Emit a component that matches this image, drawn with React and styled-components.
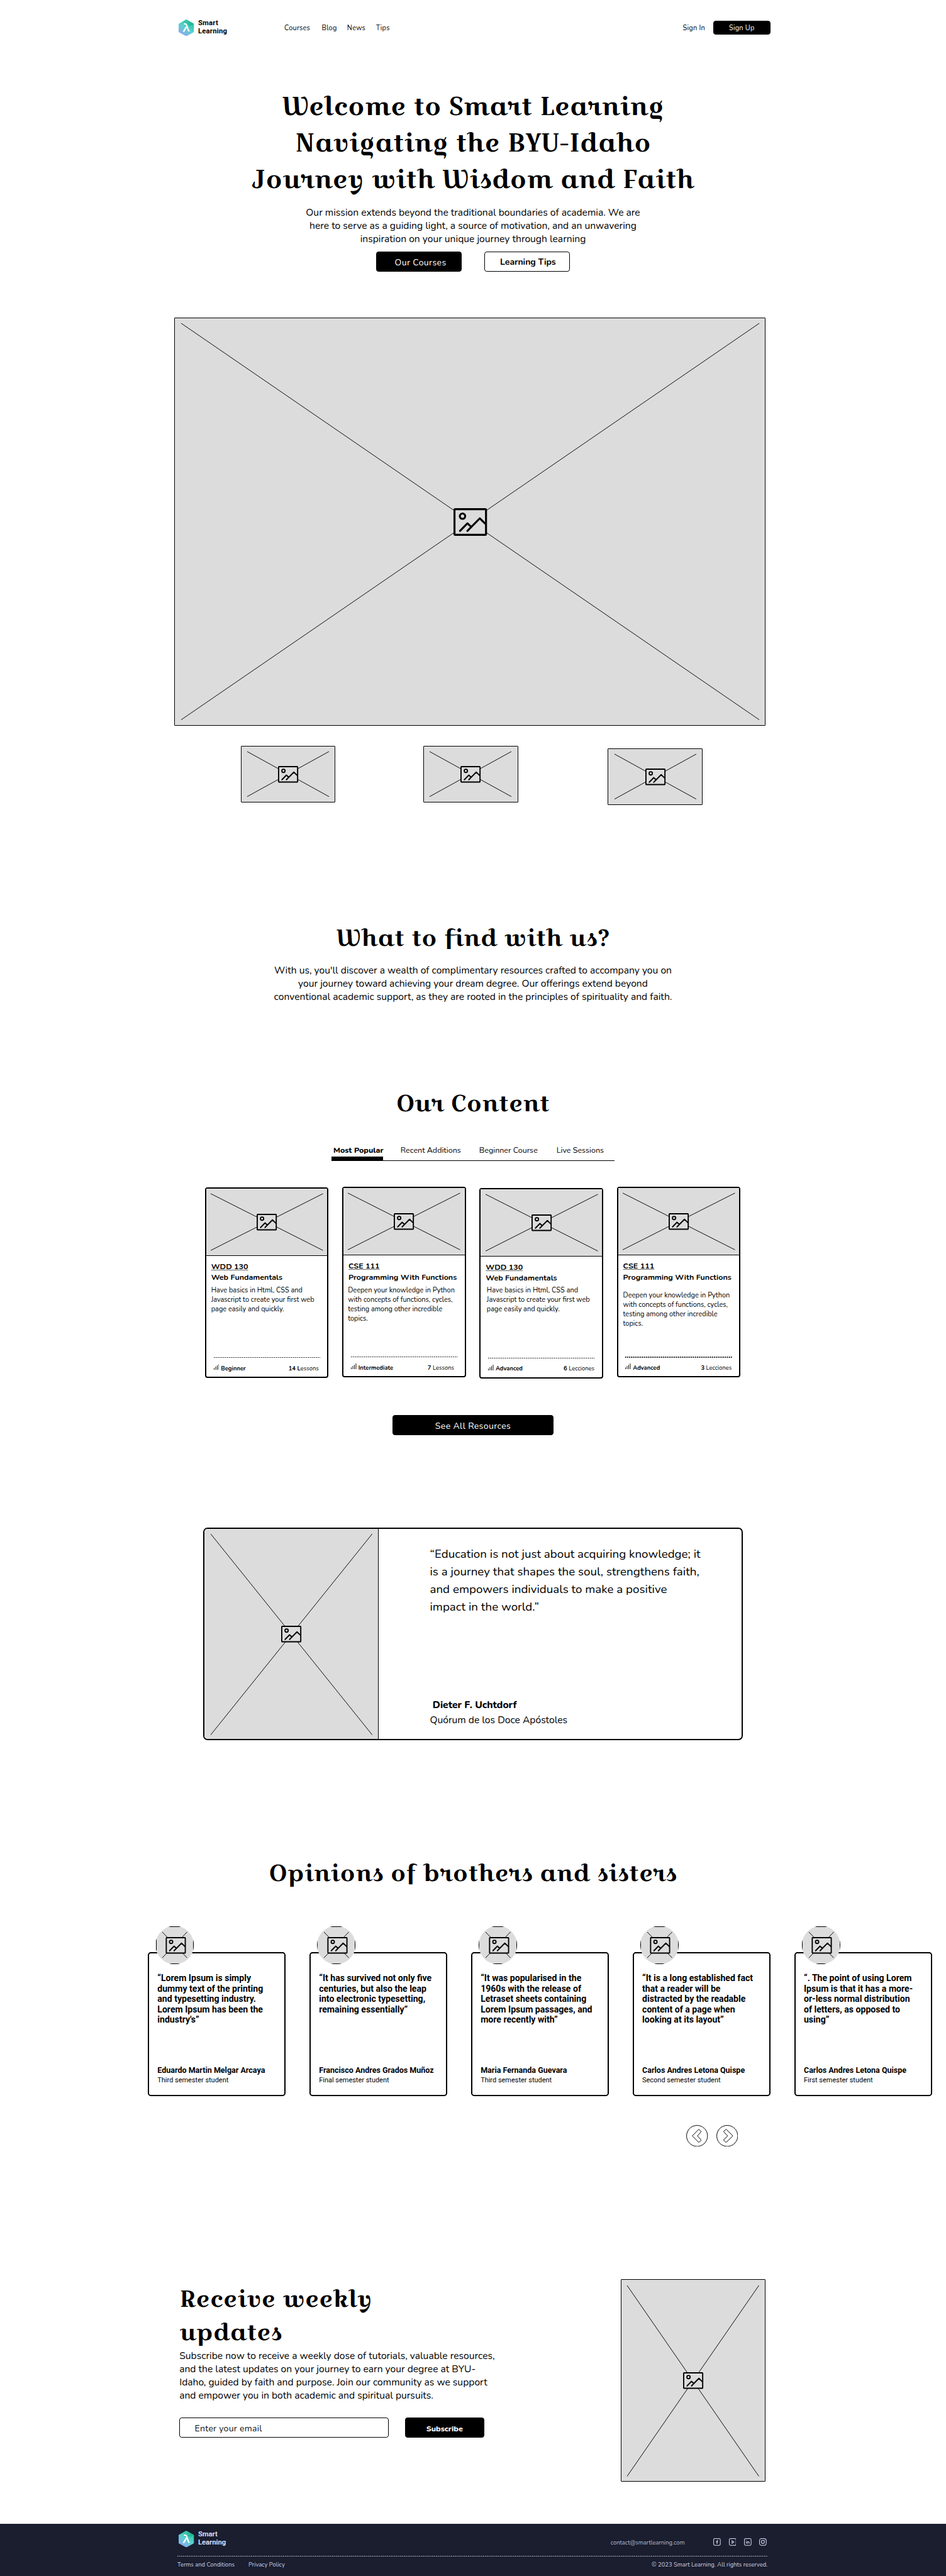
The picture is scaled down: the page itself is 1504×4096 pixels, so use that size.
import React from "react";
import styled, { createGlobalStyle, css } from "styled-components";

/* 1rem is ten design pixels */
const GlobalStyle = createGlobalStyle`
  html { font-size: 7.83333px; }
  body { margin: 0; background: #fff; }
  *, *::before, *::after { box-sizing: border-box; }
  h1, h2, h3, p { margin: 0; padding: 0; font-size: inherit; font-weight: inherit; }
`;

const sans = `Nunito, "Open Sans", sans-serif`;
const grotesk = `Roboto, "Liberation Sans", sans-serif`;
const display = `"Croissant One", "Liberation Serif", serif`;

const Page = styled.div`
  width: 1504px;
  height: 4096px;
  overflow: hidden;
  display: flex;
  flex-direction: column;
  font-family: ${sans};
  color: #000;
`;

/* ---------- shared pieces ---------- */

const Heading = styled.h2`
  margin: 0.12rem 0 -0.12rem;
  font-family: ${display};
  font-size: ${(p) => p.$size || 4.8}rem;
  line-height: ${(p) => p.$line || 7}rem;
  text-align: ${(p) => p.$align || "center"};
  white-space: pre-line;
`;

const Copy = styled.p`
  margin-top: ${(p) => p.$gap || 0}rem;
  font-size: 2rem;
  line-height: 2.7rem;
  text-align: ${(p) => p.$align || "center"};
  white-space: pre;
`;

const Button = styled.button`
  display: flex;
  align-items: center;
  justify-content: center;
  flex: none;
  width: ${(p) => p.$width}rem;
  height: ${(p) => p.$height || 4.1}rem;
  margin-top: ${(p) => p.$gap || 0}rem;
  padding: ${(p) => p.$pad || "0.4rem 0 0"};
  border: 1px solid #000;
  border-radius: 0.5rem;
  background: ${(p) => (p.$outline ? "#fff" : "#000")};
  color: ${(p) => (p.$outline ? "#000" : "#fff")};
  font-family: ${sans};
  font-size: ${(p) => p.$size || 1.8}rem;
  font-weight: ${(p) => p.$weight || 400};
  letter-spacing: ${(p) => p.$track ?? 0.045}rem;
  white-space: nowrap;
`;

const Frame = styled.div`
  display: grid;
  grid-template: minmax(0, 1fr) / minmax(0, 1fr);
  flex: none;
  width: ${(p) => p.$width}rem;
  height: ${(p) => p.$height}rem;
  background: #dcdcdc;
  border: 1px solid #000;
  border-radius: ${(p) => p.$radius || "1px"};
  > svg { grid-area: 1 / 1; place-self: center; }
`;

const Cross = styled.svg`
  width: calc(100% - ${(p) => p.$inset[0] * 2}rem);
  height: calc(100% - ${(p) => p.$inset[1] * 2}rem);
  overflow: visible;
  line { stroke: #000; stroke-width: 0.95px; vector-effect: non-scaling-stroke; }
`;

const PictureIcon = styled.svg`
  width: ${(p) => p.$width}rem;
  height: ${(p) => p.$width * 0.824}rem;
  fill: none;
  stroke: #000;
  stroke-width: 4;
  stroke-linecap: round;
  stroke-linejoin: round;
`;

function Picture({ icon = 4.1, inset = [1.2, 1.05], shift = 0 }) {
  return (
    <>
      <Cross $inset={inset} viewBox="0 0 100 100" preserveAspectRatio="none">
        <line x1="0" y1="0" x2="100" y2="100" />
        <line x1="100" y1="0" x2="0" y2="100" />
      </Cross>
      <PictureIcon $width={icon} viewBox={`${-shift} 0 68 56`} overflow="visible">
        <rect x="2" y="2" width="64" height="52" rx="1.5" fill="#dcdcdc" />
        <circle cx="18.3" cy="16.3" r="5.4" />
        <path d="M13.3 46 28.3 30.7 36 38M28.3 46 53.3 20.7 65 32" />
      </PictureIcon>
    </>
  );
}

/* ---------- brand ---------- */

const Brand = styled.div`
  display: flex;
  align-items: center;
  gap: 0.8rem;
  width: ${(p) => p.$width || "auto"};
  color: ${(p) => p.$color || "#000"};
  font: 700 1.44rem/1.6rem ${grotesk};
`;

const Mark = styled.svg`
  width: 3.1rem;
  height: 3.4rem;
`;

function Logo({ id, width, color }) {
  return (
    <Brand $width={width} $color={color}>
      <Mark viewBox="0 0 31 34">
        <defs>
          <linearGradient id={id} x1="0.75" y1="0.05" x2="0.2" y2="0.95">
            <stop offset="0" stopColor="#22bd9b" />
            <stop offset="0.5" stopColor="#5cd0cd" />
            <stop offset="1" stopColor="#8fa5f5" />
          </linearGradient>
          <linearGradient id={id + "-top"} x1="0" y1="0" x2="1" y2="0.6">
            <stop offset="0" stopColor="#4fd0b8" />
            <stop offset="1" stopColor="#14b08c" />
          </linearGradient>
        </defs>
        <path d="M15.5 0 31 8.5V25.5L15.5 34 0 25.5V8.5Z" fill={`url(#${id})`} />
        <path d="M15.5 0 31 8.5 23 13 8 4.2Z" fill={`url(#${id}-top)`} opacity="0.75" />
        <path d="M10.6 9h3.1c1.3 0 1.9.6 2.4 1.9l3.8 11.3c.3.9.9 1.2 2.3 1" fill="none" stroke="#fff" strokeWidth="2.7" />
        <path d="M15.7 14.8 9.8 25" fill="none" stroke="#fff" strokeWidth="2.9" />
      </Mark>
      <span>Smart<br />Learning</span>
    </Brand>
  );
}

/* ---------- header ---------- */

const Header = styled.header`
  display: flex;
  align-items: center;
  flex: none;
  height: 11.2rem;
  padding: 0 35.6rem 0 36.3rem;
  font-size: 1.4rem;
  letter-spacing: 0.03rem;
`;

const Nav = styled.nav`
  display: grid;
  grid-template-columns: 7.6rem 5.15rem 5.85rem auto;
  padding-top: 0.28rem;
`;

const Account = styled.div`
  display: flex;
  align-items: center;
  gap: 1.6rem;
  margin-left: auto;
  > span { padding-top: 0.28rem; }
`;

/* ---------- hero ---------- */

const Hero = styled.section`
  flex: none;
  height: 53.3rem;
  padding-top: 6.5rem;
  display: flex;
  flex-direction: column;
  align-items: center;
`;

const Actions = styled.div`
  display: flex;
  align-items: flex-start;
  gap: 4.5rem;
  margin-top: 1.1rem;
`;

const Gallery = styled.section`
  flex: none;
  height: 115.5rem;
  padding-left: 35.4rem;
`;

const Thumbs = styled.div`
  display: flex;
  padding: 4.05rem 0 0 13.45rem;
  gap: 17.8rem;
  > :last-child { margin: 0.5rem 0 0 0.4rem; }
`;

/* ---------- text sections ---------- */

const Section = styled.section`
  flex: none;
  height: ${(p) => p.$height}rem;
  padding-top: ${(p) => p.$top || 0}rem;
  display: flex;
  flex-direction: column;
  align-items: center;
`;

const Tabs = styled.nav`
  display: grid;
  grid-template-columns: 13.65rem 15.95rem 15.7rem auto;
  width: 57.4rem;
  height: 3.5rem;
  margin-top: 4.82rem;
  padding-left: 0.35rem;
  border-bottom: 1px solid #000;
  font-size: 1.6rem;
  line-height: 2.6rem;
  white-space: nowrap;
`;

const Tab = styled.span`
  height: 3.5rem;
  ${(p) => p.$active && css`
    width: 10.4rem;
    margin-left: -0.35rem;
    padding-left: 0.35rem;
    border-bottom: 0.9rem solid #000;
    font-weight: 800;
  `}
`;

/* ---------- courses ---------- */

const Courses = styled.div`
  display: flex;
  flex: none;
  gap: 2.77rem;
  width: 108.8rem;
  height: 38.8rem;
  margin-top: 5.26rem;
`;

const Course = styled.article`
  display: flex;
  flex-direction: column;
  flex: none;
  width: 25.1rem;
  height: 38.7rem;
  margin-top: ${(p) => p.$drop}rem;
  border: 0.3rem solid #000;
  border-radius: 0.5rem;
`;

const CoursePicture = styled(Frame)`
  width: 100%;
  height: 13.65rem;
  border: 0;
  border-bottom: 1px solid #000;
  border-radius: 0;
`;

const CourseBody = styled.div`
  flex: 1;
  padding: 1.05rem 0 0 1rem;
  font-size: 1.6rem;
  line-height: 2.2rem;
  font-weight: 700;
  white-space: nowrap;
`;

const Code = styled.div`
  text-decoration: underline #666;
  text-decoration-thickness: 1px;
  text-underline-offset: 0.1rem;
`;

const Summary = styled.p`
  margin: ${(p) => p.$gap}rem 0 0 ${(p) => p.$shift}rem;
  font-size: 1.4rem;
  line-height: 1.92rem;
  font-weight: 400;
  white-space: pre;
`;

const CourseFoot = styled.footer`
  display: flex;
  align-items: flex-end;
  width: 21.6rem;
  height: 3.05rem;
  margin: 0 0 0.9rem 1.5rem;
  padding-right: ${(p) => p.$end}rem;
  background: repeating-linear-gradient(90deg, #000 0 1px, #777 1px 2px, transparent 2px 3px) 0 0 / 100% ${(p) => (p.$heavy ? 2 : 1)}px no-repeat;
  font-size: 1.2rem;
  line-height: 1.6rem;
  > b { margin-right: auto; }
`;

const Level = styled.svg`
  width: 1.1rem;
  height: 1.2rem;
  margin: 0 0.4rem 0.5rem 0;
`;

/* ---------- quote ---------- */

const QuoteCard = styled.article`
  display: flex;
  flex: none;
  width: 109.5rem;
  height: 43.1rem;
  border: 0.3rem solid #000;
  border-radius: 0.9rem;
  overflow: hidden;
`;

const QuotePicture = styled(Frame)`
  width: 35.3rem;
  height: 100%;
  border-width: 0 1px 0 0;
  border-radius: 0;
`;

const QuoteBody = styled.div`
  display: flex;
  flex-direction: column;
  justify-content: space-between;
  padding: 3.2rem 0 2.2rem 10.45rem;
  font-size: 2rem;
  line-height: 3.06rem;
  > p { font-size: 2.4rem; line-height: 3.6rem; white-space: pre; }
  strong { display: block; padding-left: 0.55rem; font-weight: 800; }
`;

/* ---------- opinions ---------- */

const Opinions = styled.div`
  align-self: flex-start;
  display: flex;
  gap: 4.8rem;
  margin-top: 12.65rem;
  padding-left: 30rem;
`;

const Opinion = styled.article`
  display: flex;
  flex-direction: column;
  flex: none;
  width: 28rem;
  height: 29.2rem;
  padding: 0 0 2rem 1.7rem;
  border: 2px solid #000;
  border-radius: 0.6rem;
  font-family: ${grotesk};
  > p { font-size: 1.8rem; line-height: 2.1rem; font-weight: 700; white-space: pre; }
`;

const Avatar = styled(Frame)`
  margin: -5.57rem 0 1.83rem -0.35rem;
  clip-path: circle(3.9rem);
`;

const Author = styled.div`
  margin-top: auto;
  font-size: 1.4rem;
  line-height: 2rem;
  > strong { display: block; font-size: 1.6rem; }
`;

const Pager = styled.div`
  display: flex;
  gap: 1.7rem;
  align-self: flex-start;
  margin: 5.85rem 0 0 139.3rem;
  svg { width: 4.4rem; height: 4.4rem; fill: none; stroke: #000; stroke-width: 1.25; }
`;

/* ---------- newsletter ---------- */

const Newsletter = styled.section`
  display: flex;
  flex: none;
  justify-content: space-between;
  height: 49.6rem;
  padding: 0 36.6rem 0 36.4rem;
  > :first-child { padding-top: 0.45rem; }
  > :first-child > h2 { margin: 0; }
`;

const Form = styled.form`
  display: flex;
  gap: 3.25rem;
  margin-top: 3.05rem;
`;

const Email = styled.input`
  width: 42.55rem;
  height: 4.1rem;
  padding: 0.3rem 0 0 3rem;
  border: 1px solid #000;
  border-radius: 0.5rem;
  font: 400 1.8rem ${sans};
  letter-spacing: 0.03rem;
  &::placeholder { color: #111; opacity: 1; }
`;

/* ---------- footer ---------- */

const Footer = styled.footer`
  flex: 1;
  padding: 1.4rem 36.2rem 0 36rem;
  background: #1a1e2f;
  color: #c9cde2;
  font-size: 1.2rem;
  line-height: 1.6rem;
`;

const FooterTop = styled.div`
  display: flex;
  align-items: center;
  height: 5.2rem;
  padding: 0 0.2rem 1.9rem 0.3rem;
  background: repeating-linear-gradient(90deg, #c9cde2 0 1px, #8a8ea2 1px 2px, transparent 2px 3px) 0 100% / 100% 1px no-repeat;
`;

const Mail = styled.span`
  margin: 1.7rem 5.85rem 0 auto;
  color: #b4b8cc;
`;

const Socials = styled.div`
  display: flex;
  gap: 1.6rem;
  padding-top: 1.4rem;
  svg { display: block; width: 1.5rem; height: 1.5rem; fill: none; stroke: #d6daf0; stroke-width: 1.3; }
`;

const FooterBottom = styled.div`
  display: flex;
  gap: 2.8rem;
  padding-top: 1rem;
  > :last-child { margin-left: auto; }
`;

function Social({ children, round = 2.4 }) {
  return (
    <svg viewBox="0 0 15 15">
      <rect x="0.7" y="0.7" width="13.6" height="13.6" rx={round} />
      {children}
    </svg>
  );
}

/* ---------- data ---------- */

const htmlCourse = {
  code: "WDD 130",
  title: "Web Fundamentals",
  text: "Have basics in Html, CSS and\nJavascript to create your first web\npage easily and quickly.",
};
const pythonCourse = {
  code: "CSE 111",
  title: "Programming With Functions",
  text: "Deepen your knowledge in Python\nwith concepts of functions, cycles,\ntesting among other incredible\ntopics.",
};

const courses = [
  { ...htmlCourse, level: "Beginner", lessons: <span><b>14 L</b>essons</span>, drop: 0.1, gap: 0.5, end: 0.25 },
  { ...pythonCourse, level: "Intermediate", lessons: <span><b>7</b> Lessons</span>, drop: 0, gap: 0.6, shift: -0.1, end: 0.65 },
  { ...htmlCourse, level: "Advanced", lessons: <span><b>6</b> Lecciones</span>, drop: 0.2, gap: 0.4, shift: 0.2, end: 0.05 },
  { ...pythonCourse, level: "Advanced", lessons: <span><b>3</b> Lecciones</span>, drop: 0, gap: 1.7, end: 0.05, heavy: true },
];

const opinions = [
  ["“Lorem Ipsum is simply\ndummy text of the printing\nand typesetting industry.\nLorem Ipsum has been the\nindustry's”", "Eduardo Martin Melgar Arcaya", "Third semester student"],
  ["“It has survived not only five\ncenturies, but also the leap\ninto electronic typesetting,\nremaining essentially”", "Francisco Andres Grados Muñoz", "Final semester student"],
  ["“It was popularised in the\n1960s with the release of\nLetraset sheets containing\nLorem Ipsum passages, and\nmore recently with”", "Maria Fernanda Guevara", "Third semester student"],
  ["“It is a long established fact\nthat a reader will be\ndistracted by the readable\ncontent of a page when\nlooking at its layout”", "Carlos Andres Letona Quispe", "Second semester student"],
  ["“. The point of using Lorem\nIpsum is that it has a more-\nor-less normal distribution\nof letters, as opposed to\nusing”", "Carlos Andres Letona Quispe", "First semester student"],
];

export default function App() {
  return (
    <Page>
      <GlobalStyle />
      <Header>
        <Logo id="mark-header" width="21.4rem" />
        <Nav><span>Courses</span><span>Blog</span><span>News</span><span>Tips</span></Nav>
        <Account>
          <span>Sign In</span>
          <Button $width={11.7} $height={2.8} $size={1.4} $track={0.03} $pad="0.28rem 0 0">Sign Up</Button>
        </Account>
      </Header>

      <Hero>
        <Heading as="h1" $size={5.2} $line={7.4}>
          {"Welcome to Smart Learning\nNavigating the BYU-Idaho\nJourney with Wisdom and Faith"}
        </Heading>
        <Copy $gap={1.92}>
          {"Our mission extends beyond the traditional boundaries of academia. We are\nhere to serve as a guiding light, a source of motivation, and an unwavering\ninspiration on your unique journey through learning"}
        </Copy>
        <Actions>
          <Button $width={17.4} $gap={0.08} $pad="0.4rem 0 0 0.6rem">Our Courses</Button>
          <Button $width={17.4} $outline $weight={700} $track={-0.01} $pad="0.3rem 0 0 0.4rem">Learning Tips</Button>
        </Actions>
      </Hero>

      <Gallery>
        <Frame $width={120} $height={82.85}><Picture icon={6.8} /></Frame>
        <Thumbs>
          <Frame $width={19.25} $height={11.5}><Picture /></Frame>
          <Frame $width={19.25} $height={11.5}><Picture /></Frame>
          <Frame $width={19.25} $height={11.5}><Picture /></Frame>
        </Thumbs>
      </Gallery>

      <Section $height={40.35} $top={6.82}>
        <Heading>What to find with us?</Heading>
        <Copy $gap={1.88}>
          {"With us, you'll discover a wealth of complimentary resources crafted to accompany you on\nyour journey toward achieving your dream degree. Our offerings extend beyond\nconventional academic support, as they are rooted in the principles of spirituality and faith."}
        </Copy>
      </Section>

      <Section $height={89.8}>
        <Heading>Our Content</Heading>
        <Tabs>
          <Tab $active>Most Popular</Tab>
          <Tab>Recent Additions</Tab>
          <Tab>Beginner Course</Tab>
          <Tab>Live Sessions</Tab>
        </Tabs>
        <Courses>
          {courses.map((c, i) => (
            <Course key={i} $drop={c.drop}>
              <CoursePicture><Picture inset={[0.9, 1]} /></CoursePicture>
              <CourseBody>
                <Code>{c.code}</Code>
                <h3>{c.title}</h3>
                <Summary $gap={c.gap} $shift={c.shift || 0}>{c.text}</Summary>
              </CourseBody>
              <CourseFoot $end={c.end} $heavy={c.heavy}>
                <Level viewBox="0 0 11 12">
                  <path d="M.6 12V8M3.8 12V5M7 12V2.8M10.2 12V0" stroke="#000" strokeWidth="1.2" />
                </Level>
                <b>{c.level}</b>
                {c.lessons}
              </CourseFoot>
            </Course>
          ))}
        </Courses>
        <Button $width={32.6} $gap={7.47}>See All Resources</Button>
      </Section>

      <Section $height={66.5}>
        <QuoteCard>
          <QuotePicture><Picture inset={[1.2, 0.9]} /></QuotePicture>
          <QuoteBody>
            <p>{"“Education is not just about acquiring knowledge; it\nis a journey that shapes the soul, strengthens faith,\nand empowers individuals to make a positive\nimpact in the world.”"}</p>
            <div><strong>Dieter F. Uchtdorf</strong>Quórum de los Doce Apóstoles</div>
          </QuoteBody>
        </QuoteCard>
      </Section>

      <Section $height={86.05}>
        <Heading>Opinions of brothers and sisters</Heading>
        <Opinions>
          {opinions.map(([text, name, role]) => (
            <Opinion key={text}>
              <Avatar $width={7.7} $height={7.7} $radius="0"><Picture inset={[1.2, 1.1]} shift={3} /></Avatar>
              <p>{text}</p>
              <Author><strong>{name}</strong>{role}</Author>
            </Opinion>
          ))}
        </Opinions>
        <Pager>
          <svg viewBox="0 0 44 44">
            <circle cx="22" cy="22" r="21.3" />
            <path d="M25.6 8.5 30.4 13.3 22.8 22 30.4 30.5 25.6 35.2 12.2 22Z" />
          </svg>
          <svg viewBox="0 0 44 44">
            <circle cx="22" cy="22" r="21.3" />
            <path d="M19.7 8.5 14.4 13.3 22.8 22 14.4 30.5 19.7 35.2 33.4 22Z" />
          </svg>
        </Pager>
      </Section>

      <Newsletter>
        <div>
          <Heading $align="left" $line={6.8}>{"Receive weekly\nupdates"}</Heading>
          <Copy $align="left" $gap={0.15}>
            {"Subscribe now to receive a weekly dose of tutorials, valuable resources,\nand the latest updates on your journey to earn your degree at BYU-\nIdaho, guided by faith and purpose. Join our community as we support\nand empower you in both academic and spiritual pursuits."}
          </Copy>
          <Form>
            <Email placeholder="Enter your email" />
            <Button type="button" $width={16.05} $size={1.6} $weight={800} $track={0} $pad="0.25rem 0 0">Subscribe</Button>
          </Form>
        </div>
        <Frame $width={29.4} $height={41.1}><Picture /></Frame>
      </Newsletter>

      <Footer>
        <FooterTop>
          <Logo id="mark-footer" color="#d6daf0" />
          <Mail>contact@smartlearning.com</Mail>
          <Socials>
            <Social><path d="M9.6 4.2H8.7Q7.6 4.2 7.6 5.4V11.5M5.8 7.2H9.4" strokeWidth="1.5" /></Social>
            <Social><path d="M6.2 5V10.2L10 7.6Z" /></Social>
            <Social><path d="M4.6 6.5V11M4.6 4V5.2M7.1 11V6.5M7.1 8.3Q7.3 7 8.7 7 10.3 7 10.3 8.6V11" /></Social>
            <Social round={4}><circle cx="7.5" cy="7.5" r="3.2" /><path d="M10.8 3.7H12" /></Social>
          </Socials>
        </FooterTop>
        <FooterBottom>
          <span>Terms and Conditions</span>
          <span>Privacy Policy</span>
          <span>© 2023 Smart Learning. All rights reserved.</span>
        </FooterBottom>
      </Footer>
    </Page>
  );
}
